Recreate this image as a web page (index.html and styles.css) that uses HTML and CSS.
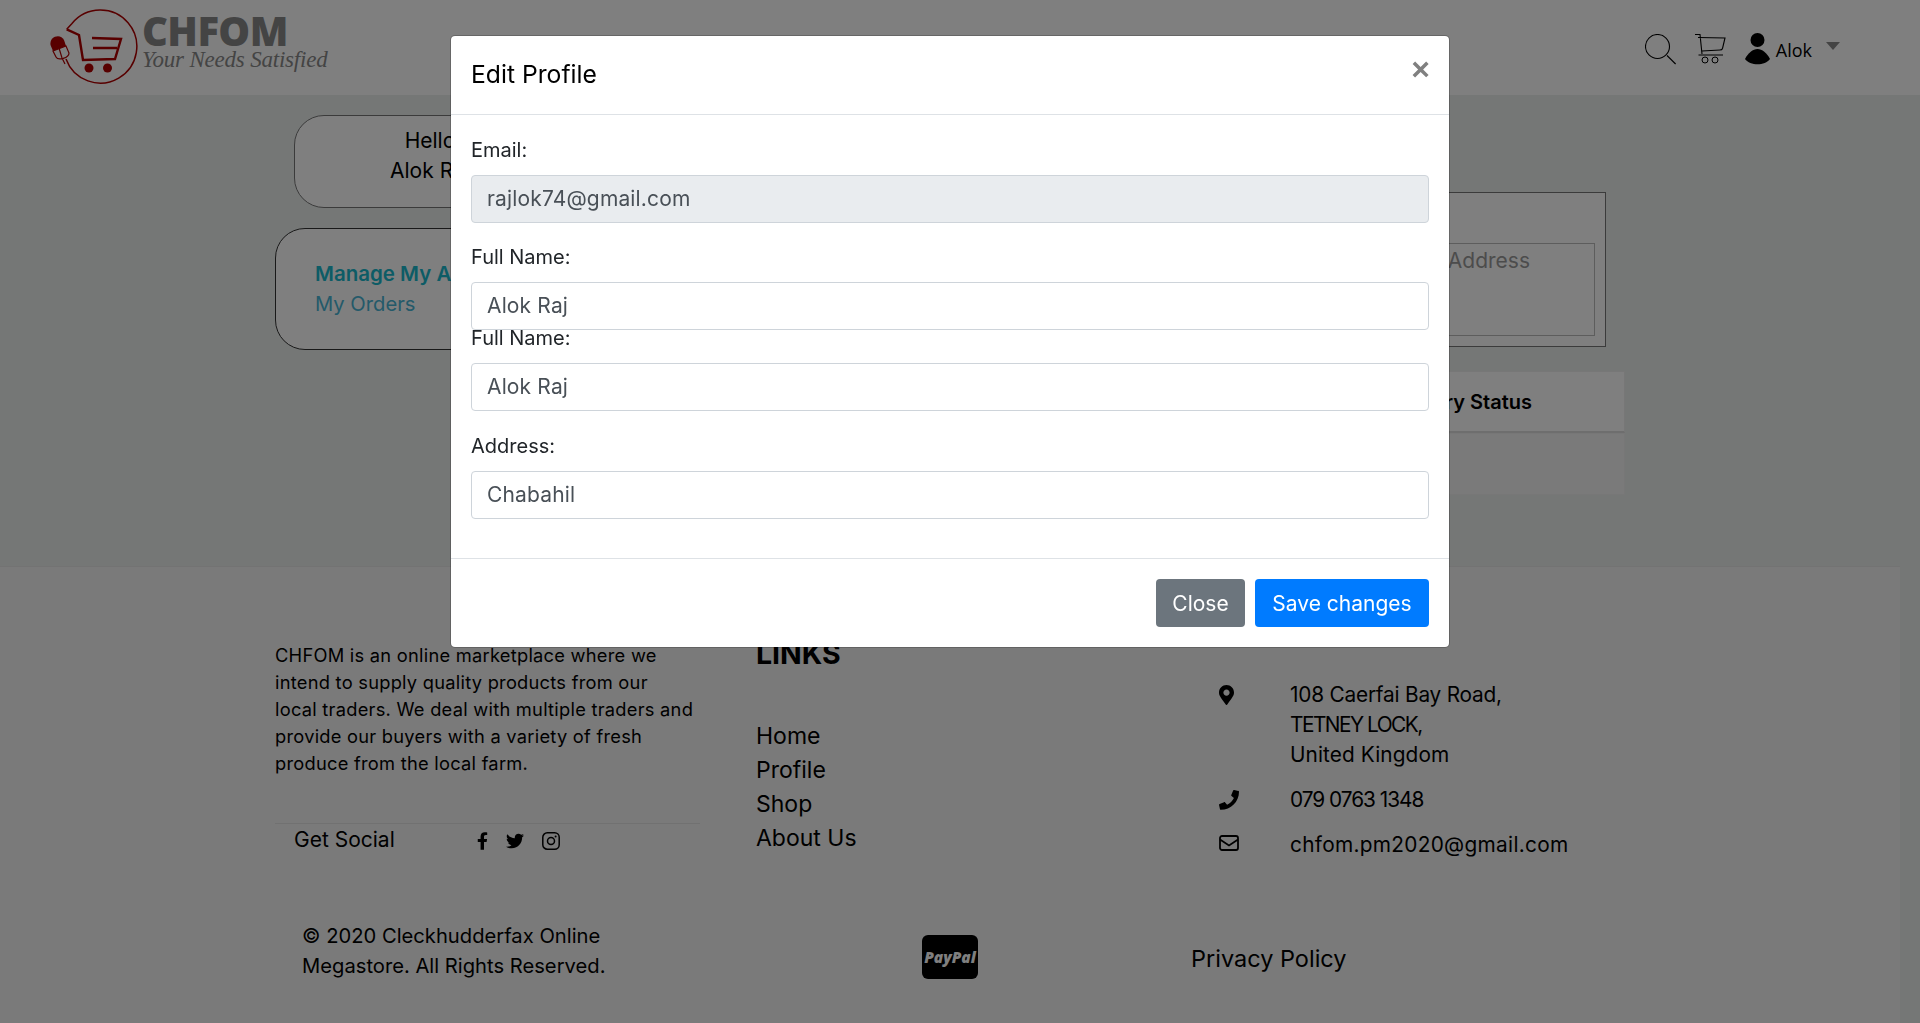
FILE: index.html
```html
<!DOCTYPE html>
<html lang="en">
<head>
<meta charset="utf-8">
<title>Edit Profile</title>
<link rel="stylesheet" href="styles.css">
</head>
<body>
<div class="page">
  <header class="topbar">
    <div class="logo">
      <svg class="logo-mark" viewBox="48 8 90 80" width="90" height="80">
        <path d="M66 59 A36.500 36.500 0 1 0 72 23.500 L66.700 29.300" fill="none" stroke="#b00000" stroke-width="1.500"/>
        <path d="M66.700 29.300 L79 35 L83 60 L115 59 L121 39 L92 38 M93 48 H117" fill="none" stroke="#b00000" stroke-width="2.400"/>
        <circle cx="89" cy="68" r="4.500" fill="#b00000"/>
        <circle cx="107.500" cy="68" r="4.500" fill="#b00000"/>
        <path d="M50.500 45 C49 36 61 33 64 40 L66 46 L53 51 Z" fill="#b00000"/>
        <path d="M53 51 L66 46 L69 53 C69 58 58 61 56 57 Z M59 48 L62 58 L65 64" fill="none" stroke="#b00000" stroke-width="1.200"/>
      </svg>
      <div class="logo-text">
        <div class="logo-name">CHFOM</div>
        <div class="logo-tag">Your Needs Satisfied</div>
      </div>
    </div>
    <div class="top-actions">
      <svg class="ico" width="31" height="31" viewBox="0 0 31 31"><circle cx="12.500" cy="12.500" r="12" fill="none" stroke="#000" stroke-width="1.100"/><path d="M22 21.500 L30.600 30" fill="none" stroke="#000" stroke-width="1.100"/></svg>
      <svg class="ico" width="31" height="31" viewBox="0 0 31 31"><path d="M0 .5 H5 L7 20 M3 3.500 L30 4 L27.500 14.500 Q27 16 25 16 L7 17 M3.500 21 H28" fill="none" stroke="#000" stroke-width="1.100"/><circle cx="10" cy="26" r="3" fill="none" stroke="#000"/><circle cx="20" cy="26" r="3" fill="none" stroke="#000"/></svg>
      <div class="user">
        <svg width="26" height="32" viewBox="0 0 26 32"><circle cx="12.500" cy="7" r="7"/><path d="M0 26 C3 20 8 16 12.500 16 C17 16 22 20 25 26 C20 33 5 33 0 26 Z"/></svg>
        <span class="user-name">Alok</span>
        <span class="caret"></span>
      </div>
    </div>
  </header>

  <main class="content">
    <div class="side">
      <div class="hello">Hello<br>Alok Raj</div>
      <div class="manage">
        <div class="manage-title">Manage My Account</div>
        <div class="manage-link">My Orders</div>
      </div>
    </div>
    <div class="main-col">
      <div class="address-box"><div class="address-inner">Address</div></div>
      <div class="orders">
        <div class="orders-head">Delivery Status</div>
        <div class="orders-row"></div>
      </div>
    </div>
  </main>

  <footer class="footer">
    <div class="foot-grid">
      <div class="about">
        <p class="about-text">CHFOM is an online marketplace where we<br>intend to supply quality products from our<br>local traders. We deal with multiple traders and<br>provide our buyers with a variety of fresh<br>produce from the local farm.</p>
        <div class="social">
          <span class="social-label">Get Social</span>
          <span class="social-icons">
            <svg width="11" height="18" viewBox="0 0 320 512"><path d="M279 288l14-93h-89v-60c0-25 12-50 52-50h41V6S260 0 225 0c-73 0-121 45-121 125v70H22v93h82v224h100V288z"/></svg>
            <svg width="20" height="18" viewBox="0 0 512 512"><path d="M459 152c.3 4.500.3 9 .3 13.600 0 138.700-105.600 298.600-298.600 298.600-59.500 0-114.700-17.200-161.100-47.100 8.400 1 16.600 1.300 25.300 1.300 49.100 0 94.200-16.600 130.300-44.800-46.100-1-84.800-31.200-98.100-72.800 6.500 1 13 1.600 19.800 1.600 9.400 0 18.800-1.300 27.600-3.600-48.100-9.700-84.100-52-84.100-103v-1.300c14 7.800 30.200 12.700 47.400 13.300-28.300-18.800-46.800-51-46.800-87.400 0-19.500 5.200-37.400 14.300-53 51.700 63.700 129.300 105.300 216.400 109.800-1.600-7.800-2.600-15.900-2.600-24 0-57.800 46.800-104.900 104.900-104.900 30.200 0 57.500 12.700 76.700 33.100 23.700-4.500 46.500-13.300 66.600-25.300-7.800 24-24.400 44.200-46.100 57.200 21.100-2.300 41.600-8.100 60.400-16.200-14.300 20.800-32.200 39.300-52.600 54.200z"/></svg>
            <svg width="18" height="18" viewBox="0 0 18 18"><rect x=".8" y=".8" width="16.400" height="16.400" rx="4.500" fill="none" stroke="#000" stroke-width="1.500"/><circle cx="9" cy="9" r="3.500" fill="none" stroke="#000" stroke-width="1.500"/><circle cx="13.600" cy="4.400" r="1"/></svg>
          </span>
        </div>
      </div>
      <div class="links">
        <h3 class="links-title">LINKS</h3>
        <ul class="links-list">
          <li>Home</li><li>Profile</li><li>Shop</li><li>About Us</li>
        </ul>
      </div>
      <div class="contact">
        <div class="contact-row">
          <span class="contact-cell"><svg width="15" height="20" viewBox="0 0 384 512"><path d="M172 502C27 291 0 269 0 192 0 86 86 0 192 0s192 86 192 192c0 77-27 99-172 310-10 14-30 14-40 0zm20-230c44 0 80-36 80-80s-36-80-80-80-80 36-80 80 36 80 80 80z"/></svg></span>
          <div><span class="tight-road">108 Caerfai Bay Road,</span><br><span class="tight-town">TETNEY LOCK,</span><br>United Kingdom</div>
        </div>
        <div class="contact-row">
          <span class="contact-cell"><svg width="20" height="20" viewBox="0 0 512 512"><path d="M493 24L389 0c-11-3-22 3-27 14l-48 112c-4 10-1 21 7 28l61 50c-36 76-98 139-175 175l-50-61c-7-8-18-11-28-7L16 359C5 364-1 375 1 386l24 104c3 11 12 18 23 18 256 0 464-207 464-464 0-11-8-20-19-24z"/></svg></span>
          <div class="tight-phone">079 0763 1348</div>
        </div>
        <div class="contact-row">
          <span class="contact-cell"><svg width="20" height="16" viewBox="0 0 20 16"><rect x="1" y="1" width="18" height="14" rx="2" fill="none" stroke="#000" stroke-width="1.800"/><path d="M1 4.500 L10 10.500 L19 4.500" fill="none" stroke="#000" stroke-width="1.800"/></svg></span>
          <div class="wide-mail">chfom.pm2020@gmail.com</div>
        </div>
      </div>
    </div>
    <div class="foot-bottom">
      <div class="copy">© 2020 Cleckhudderfax Online<br>Megastore. All Rights Reserved.</div>
      <div class="paypal-wrap"><span class="paypal">PayPal</span></div>
      <div class="privacy">Privacy Policy</div>
    </div>
  </footer>
</div>

<div class="backdrop"></div>

<div class="modal">
  <div class="modal-head">
    <h5 class="modal-title">Edit Profile</h5>
    <span class="modal-x">×</span>
  </div>
  <div class="modal-body">
    <div class="field">
      <label class="field-label">Email:</label>
      <div class="input input-disabled">rajlok74@gmail.com</div>
    </div>
    <div class="field field-tight">
      <label class="field-label">Full Name:</label>
      <div class="input">Alok Raj</div>
    </div>
    <div class="field field-wide">
      <label class="field-label">Full Name:</label>
      <div class="input">Alok Raj</div>
    </div>
    <div class="field">
      <label class="field-label">Address:</label>
      <div class="input">Chabahil</div>
    </div>
  </div>
  <div class="modal-foot">
    <button class="btn btn-grey">Close</button>
    <button class="btn btn-blue">Save changes</button>
  </div>
</div>
</body>
</html>
```
FILE: styles.css
```css
* { box-sizing: border-box; }
html, body { margin: 0; padding: 0; height: 100%; overflow: hidden; }
body { font-family: Inter, "Liberation Sans", sans-serif; color: #212529; font-size: 16px; background: #eaeeed; }
.page { width: 1920px; height: 1023px; display: flex; flex-direction: column; }

.topbar { height: 95px; background: #fff; display: flex; justify-content: space-between; padding: 0 80px 0 48px; flex: none; }
.logo { display: flex; align-items: flex-start; padding-top: 8px; }
.logo-mark { display: block; }
.logo-text { margin-left: 4px; width: 210px; padding-top: 8px; }
.logo-name { font: 800 40px/30px "Open Sans", sans-serif; color: #888; letter-spacing: -.6px; }
.logo-tag { font: italic 400 23px/28px "Liberation Serif", serif; color: #888; white-space: nowrap; letter-spacing: -.2px; }
.top-actions { display: flex; align-items: flex-start; gap: 19px; padding-top: 34px; }
.top-actions .ico { display: block; }
.user { display: flex; align-items: flex-start; margin-top: -1px; }
.user svg { display: block; }
.user-name { font: 400 18px/24px "Open Sans", sans-serif; color: #000; margin: 5px 0 0 5px; }
.caret { width: 0; height: 0; border-style: solid; border-width: 8px 7px 0; border-color: #888 transparent transparent; margin: 9px 0 0 14px; }

.content { height: 471px; display: flex; padding: 20px 0 0 275px; flex: none; }
.side { width: 325px; flex: none; }
.hello { width: 272px; margin-left: 19px; height: 93px; background: #fff; border: 1px solid #777; border-radius: 30px; text-align: center; font-size: 21px; line-height: 30px; color: #000; padding: 10px 0; }
.manage { width: 310px; height: 122px; margin-top: 20px; background: #fff; border: 1px solid #333; border-radius: 30px; padding: 30px 39px; white-space: nowrap; }
.manage-title { color: #1ab8cc; font-size: 20.500px; font-weight: 600; line-height: 30px; }
.manage-link { color: #48b4d4; font-size: 20.200px; line-height: 30px; }
.main-col { padding-top: 77px; width: 1025px; flex: none; }
.address-box { width: 1006px; height: 155px; background: #fff; border: 1px solid #777; padding: 50px 10px 0; }
.address-inner { height: 93px; border: 1px solid #bbb; color: #999; font-size: 21px; text-align: right; padding-right: 64px; line-height: 34px; }
.orders { margin-top: 24px; width: 1025px; }
.orders-head { height: 62px; background: #fff; border: 1px solid #eee; border-bottom: 2px solid #ddd; font-weight: 600; font-size: 20px; line-height: 60px; text-align: right; padding-right: 92px; color: #000; }
.orders-row { height: 62px; background: #f4f4f4; border: 1px solid #eee; }

.footer { flex: 1; width: 1900px; background: #f5f5f5; border-top: 1px solid #e6e6e6; color: #000; padding-left: 275px; }
.foot-grid { display: flex; padding-top: 75px; height: 354px; }
.about { width: 425px; flex: none; }
.about-text { margin: 0; font-size: 18.300px; letter-spacing: .25px; line-height: 27px; white-space: nowrap; }
.social { border-top: 1px solid #e3e3e3; margin-top: 46px; display: flex; align-items: center; height: 32px; padding-left: 19px; font-size: 21px; }
.social-label { width: 183px; }
.social-icons { display: flex; gap: 17px; align-items: center; margin-top: 3px; }
.social-icons svg { display: block; }
.links { width: 463px; margin-left: 56px; flex: none; }
.links-title { margin: -7px 0 0; font-size: 28.500px; line-height: 38px; font-weight: 700; color: #000; }
.links-list { list-style: none; margin: 46px 0 0; padding: 0; font-size: 23px; line-height: 34px; }
.contact { font-size: 20.800px; letter-spacing: .1px; line-height: 30px; margin-top: 38px; }
.contact-row { display: flex; margin-bottom: 15px; white-space: nowrap; }
.contact-cell { width: 71px; flex: none; padding-top: 5px; line-height: 0; }
.tight-road { letter-spacing: -.2px; }
.tight-town { letter-spacing: -1.500px; }
.tight-phone { letter-spacing: -1px; }
.wide-mail { letter-spacing: .3px; }
.foot-bottom { display: flex; align-items: flex-start; padding-left: 27px; }
.copy { width: 620px; font-size: 20.200px; line-height: 30px; }
.paypal-wrap { width: 269px; padding-top: 14px; line-height: 0; }
.paypal { display: inline-block; width: 56px; height: 44px; background: #000; color: #fff; border-radius: 6px; font: italic 800 15.500px/44px "Open Sans", sans-serif; text-align: center; }
.privacy { font-size: 23.500px; line-height: 34px; margin-top: 21px; }

.backdrop { position: fixed; inset: 0; background: rgba(0,0,0,.5); }

.modal { position: fixed; left: 450px; top: 35px; width: 1000px; height: 613px; background: #fff; border: 1px solid rgba(0,0,0,.2); border-radius: 5px; display: flex; flex-direction: column; color: #000; background-clip: padding-box; }
.modal-head { height: 79px; border-bottom: 1px solid #dee2e6; display: flex; justify-content: space-between; padding: 20px; flex: none; }
.modal-title { margin: 0; font-size: 24.700px; font-weight: 400; line-height: 36px; }
.modal-x { font: 700 32px/24px "Liberation Sans", sans-serif; color: #808080; margin: 1px -1px 0 0; }
.modal-body { padding: 20px 20px 0; flex: 1; }
.field { margin-bottom: 19px; }
.field-tight { margin-bottom: -7px; }
.field-wide { margin-bottom: 20px; }
.field-label { display: block; font-size: 20px; line-height: 30px; margin-bottom: 10px; color: #212529; }
.input { height: 48px; border: 1px solid #ced4da; border-radius: 4px; padding: 0 15px; font-size: 21px; letter-spacing: .15px; line-height: 46px; color: #495057; background: #fff; }
.input-disabled { background: #e9ecef; }
.modal-foot { height: 89px; border-top: 1px solid #dee2e6; display: flex; justify-content: flex-end; align-items: center; gap: 10px; padding: 0 20px; flex: none; }
.btn { height: 48px; border: 0; border-radius: 4px; color: #fff; font-family: Inter, sans-serif; font-size: 21px; padding: 0; text-align: center; }
.btn-grey { background: #6c757d; width: 89px; }
.btn-blue { background: #007bff; width: 174px; }
```
